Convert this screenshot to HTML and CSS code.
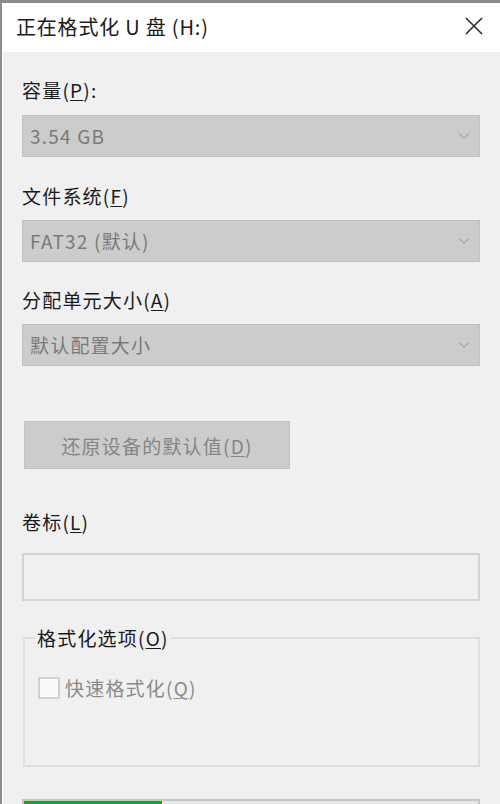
FILE: index.html
```html
<!DOCTYPE html>
<html lang="zh-CN">
<head>
<meta charset="utf-8">
<title>正在格式化 U 盘 (H:)</title>
<link rel="stylesheet" href="styles.css">
</head>
<body>
<div class="window">
  <div class="titlebar">
    <span class="title">正在格式化 U 盘 (H:)</span>
    <svg class="close" width="20" height="20" viewBox="0 0 20 20"><path d="M2 2 L18 18 M18 2 L2 18" stroke="#2b2b2b" stroke-width="1.6" fill="none"/></svg>
  </div>
  <div class="content">
    <div class="label l1">容量(<u>P</u>):</div>
    <div class="combo">
      <span>3.54 GB</span>
      <svg class="chev" width="12" height="8" viewBox="0 0 12 8"><path d="M1 1.5 L6 6 L11 1.5" stroke="#a8a8a8" stroke-width="1.3" fill="none"/></svg>
    </div>
    <div class="label l2">文件系统(<u>F</u>)</div>
    <div class="combo">
      <span>FAT32 (默认)</span>
      <svg class="chev" width="12" height="8" viewBox="0 0 12 8"><path d="M1 1.5 L6 6 L11 1.5" stroke="#a8a8a8" stroke-width="1.3" fill="none"/></svg>
    </div>
    <div class="label l3">分配单元大小(<u>A</u>)</div>
    <div class="combo">
      <span>默认配置大小</span>
      <svg class="chev" width="12" height="8" viewBox="0 0 12 8"><path d="M1 1.5 L6 6 L11 1.5" stroke="#a8a8a8" stroke-width="1.3" fill="none"/></svg>
    </div>
    <div class="button">还原设备的默认值(<u>D</u>)</div>
    <div class="label l4">卷标(<u>L</u>)</div>
    <div class="textbox"></div>
    <fieldset class="group">
      <legend>格式化选项(<u>O</u>)</legend>
      <div class="check">
        <span class="box"></span>
        <span class="check-label">快速格式化(<u>Q</u>)</span>
      </div>
    </fieldset>
    <div class="progress"><div class="fill" style="width: 30.5%"></div></div>
  </div>
</div>
</body>
</html>
```
FILE: styles.css
```css
html, body {
  margin: 0;
  padding: 0;
  height: 100%;
  overflow: hidden;
}
body {
  background: #8c8c8c;
  font-family: "Noto Sans CJK SC", "Microsoft YaHei", sans-serif;
  letter-spacing: 1.2px;
}
.window {
  margin: 3px 0 0 2px;
  height: calc(100% - 3px);
  background: #f0f0f0;
  border-left: 1px solid #ffffff;
}
.titlebar {
  height: 49px;
  background: #ffffff;
  display: flex;
  align-items: center;
  justify-content: space-between;
  padding: 0 16px 0 13px;
}
.title {
  font-size: 20px;
  letter-spacing: 0.8px;
  color: #1a1a1a;
  position: relative;
  top: -1px;
}
.close {
  margin-top: -4px;
}
.content {
  padding: 25px 20px 0 19px;
}
.label {
  font-size: 19px;
  line-height: 26px;
  color: #1a1a1a;
}
.label u, .button u, legend u, .check-label u {
  text-decoration-thickness: 1px;
  text-underline-offset: 2px;
}
.l1 { margin-bottom: 12px; }
.l2 { margin-top: 26px; margin-bottom: 11px; }
.l3 { margin-top: 25px; margin-bottom: 11px; }
.combo {
  height: 40px;
  background: #cccccc;
  border: 1px solid #c1c1c1;
  display: flex;
  align-items: center;
  justify-content: space-between;
  padding: 0 9px 0 7px;
  font-size: 19px;
  color: #7a7a7a;
}
.combo span {
  position: relative;
  top: -1px;
}
.button {
  margin-top: 55px;
  margin-left: 2px;
  width: 264px;
  height: 46px;
  background: #cccccc;
  border: 1px solid #c1c1c1;
  display: flex;
  align-items: center;
  justify-content: center;
  font-size: 19px;
  color: #858585;
}
.l4 { margin-top: 40px; margin-bottom: 18px; }
.textbox {
  height: 44px;
  border: 2px solid #d4d4d4;
  background: #f0f0f0;
}
.group {
  margin: 24px 0 0 1px;
  padding: 24px 14px 0 13px;
  border: 2px solid #dedede;
  box-sizing: border-box;
  height: 142px;
}
legend {
  font-size: 19px;
  line-height: 26px;
  color: #1a1a1a;
  padding: 0 2px;
  margin-left: -3px;
}
.check {
  display: flex;
  align-items: center;
  gap: 5px;
}
.box {
  width: 18px;
  height: 18px;
  border: 2px solid #d0d0d0;
  background: #fafafa;
}
.check-label {
  font-size: 19px;
  line-height: 26px;
  color: #8a8a8a;
}
.progress {
  margin-top: 32px;
  height: 24px;
  border: 2px solid #c4c4c4;
  background: #e6e6e6;
}
.fill {
  height: 100%;
  background: #06b025;
}
```
